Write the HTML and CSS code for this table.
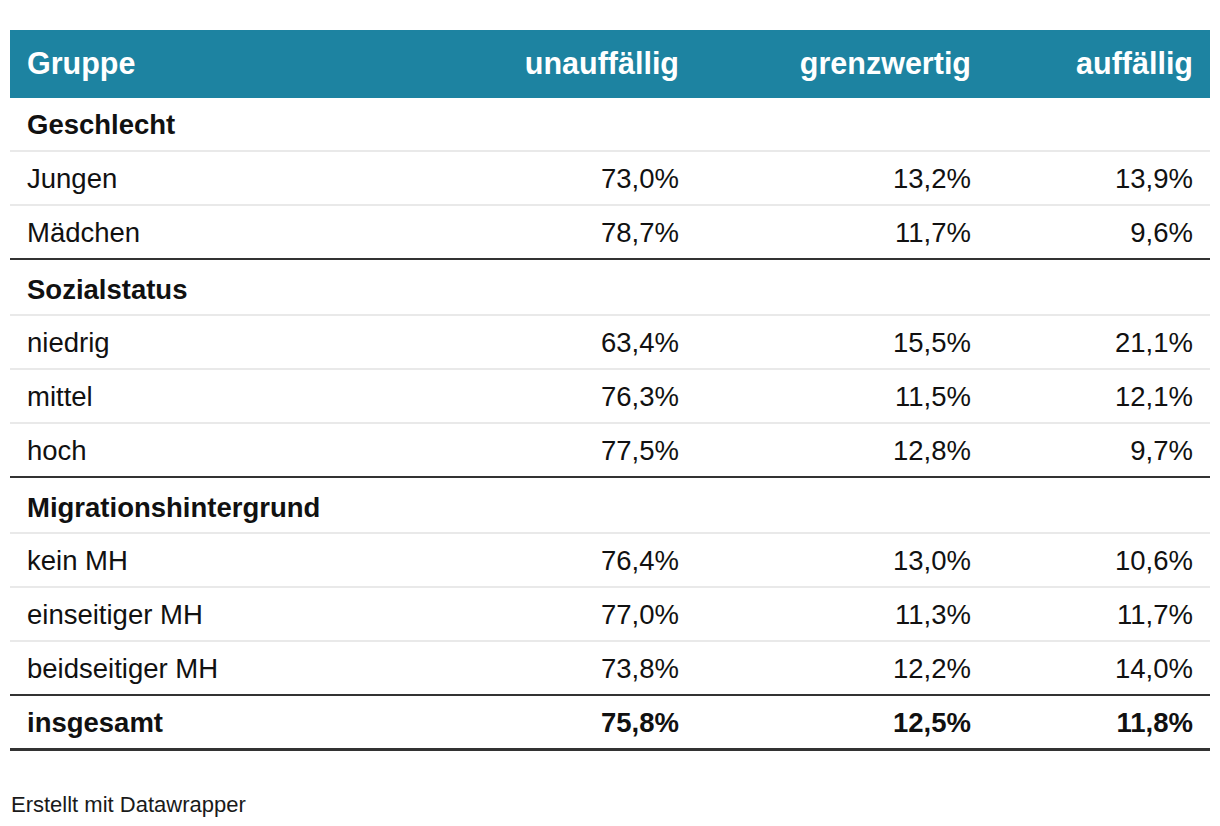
FILE: index.html
```html
<!DOCTYPE html>
<html lang="de">
<head>
<meta charset="utf-8">
<title>Tabelle</title>
<link rel="stylesheet" href="styles.css">
</head>
<body>
<div class="chart">
  <div class="dw-table" role="table">
    <div class="row head" role="row">
      <div class="cell left">Gruppe</div>
      <div class="cell">unauffällig</div>
      <div class="cell">grenzwertig</div>
      <div class="cell">auffällig</div>
    </div>
    <div class="row section first" role="row"><div class="cell left">Geschlecht</div></div>
    <div class="row" role="row"><div class="cell left">Jungen</div><div class="cell">73,0%</div><div class="cell">13,2%</div><div class="cell">13,9%</div></div>
    <div class="row end" role="row"><div class="cell left">Mädchen</div><div class="cell">78,7%</div><div class="cell">11,7%</div><div class="cell">9,6%</div></div>
    <div class="row section" role="row"><div class="cell left">Sozialstatus</div></div>
    <div class="row" role="row"><div class="cell left">niedrig</div><div class="cell">63,4%</div><div class="cell">15,5%</div><div class="cell">21,1%</div></div>
    <div class="row" role="row"><div class="cell left">mittel</div><div class="cell">76,3%</div><div class="cell">11,5%</div><div class="cell">12,1%</div></div>
    <div class="row end" role="row"><div class="cell left">hoch</div><div class="cell">77,5%</div><div class="cell">12,8%</div><div class="cell">9,7%</div></div>
    <div class="row section" role="row"><div class="cell left">Migrationshintergrund</div></div>
    <div class="row" role="row"><div class="cell left">kein MH</div><div class="cell">76,4%</div><div class="cell">13,0%</div><div class="cell">10,6%</div></div>
    <div class="row" role="row"><div class="cell left">einseitiger MH</div><div class="cell">77,0%</div><div class="cell">11,3%</div><div class="cell">11,7%</div></div>
    <div class="row end" role="row"><div class="cell left">beidseitiger MH</div><div class="cell">73,8%</div><div class="cell">12,2%</div><div class="cell">14,0%</div></div>
    <div class="row total" role="row"><div class="cell left">insgesamt</div><div class="cell">75,8%</div><div class="cell">12,5%</div><div class="cell">11,8%</div></div>
  </div>
  <div class="footer">Erstellt mit Datawrapper</div>
</div>
</body>
</html>
```
FILE: styles.css
```css
html, body {
  margin: 0;
  padding: 0;
  background: #ffffff;
}

body {
  font-family: "Liberation Sans", Arial, sans-serif;
  color: #111111;
}

.chart {
  padding: 30px 10px 0 10px;
}

.dw-table {
  width: 1200px;
  font-size: 27.5px;
}

.row {
  display: grid;
  grid-template-columns: 394px 292px 292px 222px;
  align-items: center;
  box-sizing: border-box;
  height: 54px;
  padding-top: 1px;
  border-bottom: 2px solid #e9e9e9;
  white-space: nowrap;
}

.cell {
  padding: 0 17px;
  text-align: right;
}

.cell.left {
  text-align: left;
}

.row.head {
  background: #1d83a1;
  color: #ffffff;
  font-size: 30.5px;
  font-weight: bold;
  height: 68px;
  padding-top: 0;
  padding-bottom: 2px;
  border-bottom: none;
}

.row.section {
  font-weight: bold;
  height: 56px;
  padding-top: 5px;
}

.row.section.first {
  height: 54px;
  padding-top: 2px;
}

.row.end {
  border-bottom: 2px solid #333333;
}

.row.total {
  font-weight: bold;
  height: 55px;
  border-bottom: 3px solid #333333;
}

.footer {
  margin-top: 41px;
  font-size: 22px;
  color: #1a1a1a;
  padding-left: 1px;
}
```
